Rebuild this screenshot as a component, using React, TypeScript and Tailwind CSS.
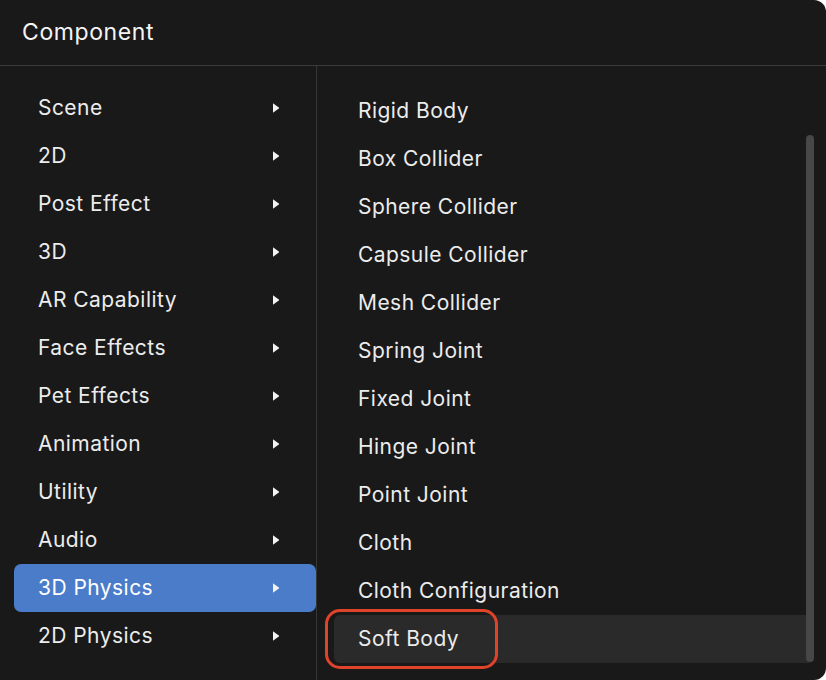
// Component picker: category list on the left, entries of the open category
// on the right. The red ring marks the entry being pointed at.

const CATEGORIES = [
  'Scene',
  '2D',
  'Post Effect',
  '3D',
  'AR Capability',
  'Face Effects',
  'Pet Effects',
  'Animation',
  'Utility',
  'Audio',
  '3D Physics',
  '2D Physics',
]

const PHYSICS_ITEMS = [
  'Rigid Body',
  'Box Collider',
  'Sphere Collider',
  'Capsule Collider',
  'Mesh Collider',
  'Spring Joint',
  'Fixed Joint',
  'Hinge Joint',
  'Point Joint',
  'Cloth',
  'Cloth Configuration',
  'Soft Body',
]

function Caret() {
  return (
    <svg width="8" height="12" viewBox="0 0 8 12" className="shrink-0">
      <path d="M1 1.2 L6.8 5.4 Q7.4 6 6.8 6.6 L1 10.8 Z" fill="#f2f2f2" />
    </svg>
  )
}

export default function App() {
  const active = '3D Physics'
  const hovered = 'Soft Body'

  return (
    <div
      className="flex h-[680px] w-[826px] flex-col overflow-hidden rounded-tr-[12px] rounded-br-[12px] bg-[#191919] text-[#ececec]"
      style={{ fontFamily: 'Inter, "Noto Sans", sans-serif' }}
    >
      <div className="flex h-[66px] shrink-0 items-center border-b border-[#3b3b3b] px-[22px] text-[23px] tracking-[0.6px] text-[#f4f4f4]">
        Component
      </div>

      <div className="flex min-h-0 flex-1">
        <div className="flex w-[317px] shrink-0 flex-col border-r border-[#363636] pl-[14px] pt-[18px]">
          {CATEGORIES.map((c) => (
            <div
              key={c}
              className={
                'flex h-[48px] items-center justify-between rounded-[7px] pl-[24px] pr-[36px] text-[21px] tracking-[0.45px] ' +
                (c === active ? 'bg-[#4a7cc9] text-white' : '')
              }
            >
              <span>{c}</span>
              <Caret />
            </div>
          ))}
        </div>

        <div className="relative flex flex-1 flex-col pl-[17px] pr-[12px] pt-[21px]">
          {PHYSICS_ITEMS.map((item) => (
            <div
              key={item}
              className={
                'relative flex h-[48px] items-center rounded-[6px] pl-[24px] text-[21px] tracking-[0.45px] ' +
                (item === hovered ? 'bg-[#2a2a2a]' : '')
              }
            >
              {item}
              {item === hovered && (
                <div className="pointer-events-none absolute left-[-9px] top-[-6px] h-[60px] w-[173px] rounded-[15px] border-[3px] border-[#df442b]" />
              )}
            </div>
          ))}
          <div className="absolute right-[12px] top-[69px] h-[527px] w-[8px] rounded-full bg-[#474747]" />
        </div>
      </div>
    </div>
  )
}
